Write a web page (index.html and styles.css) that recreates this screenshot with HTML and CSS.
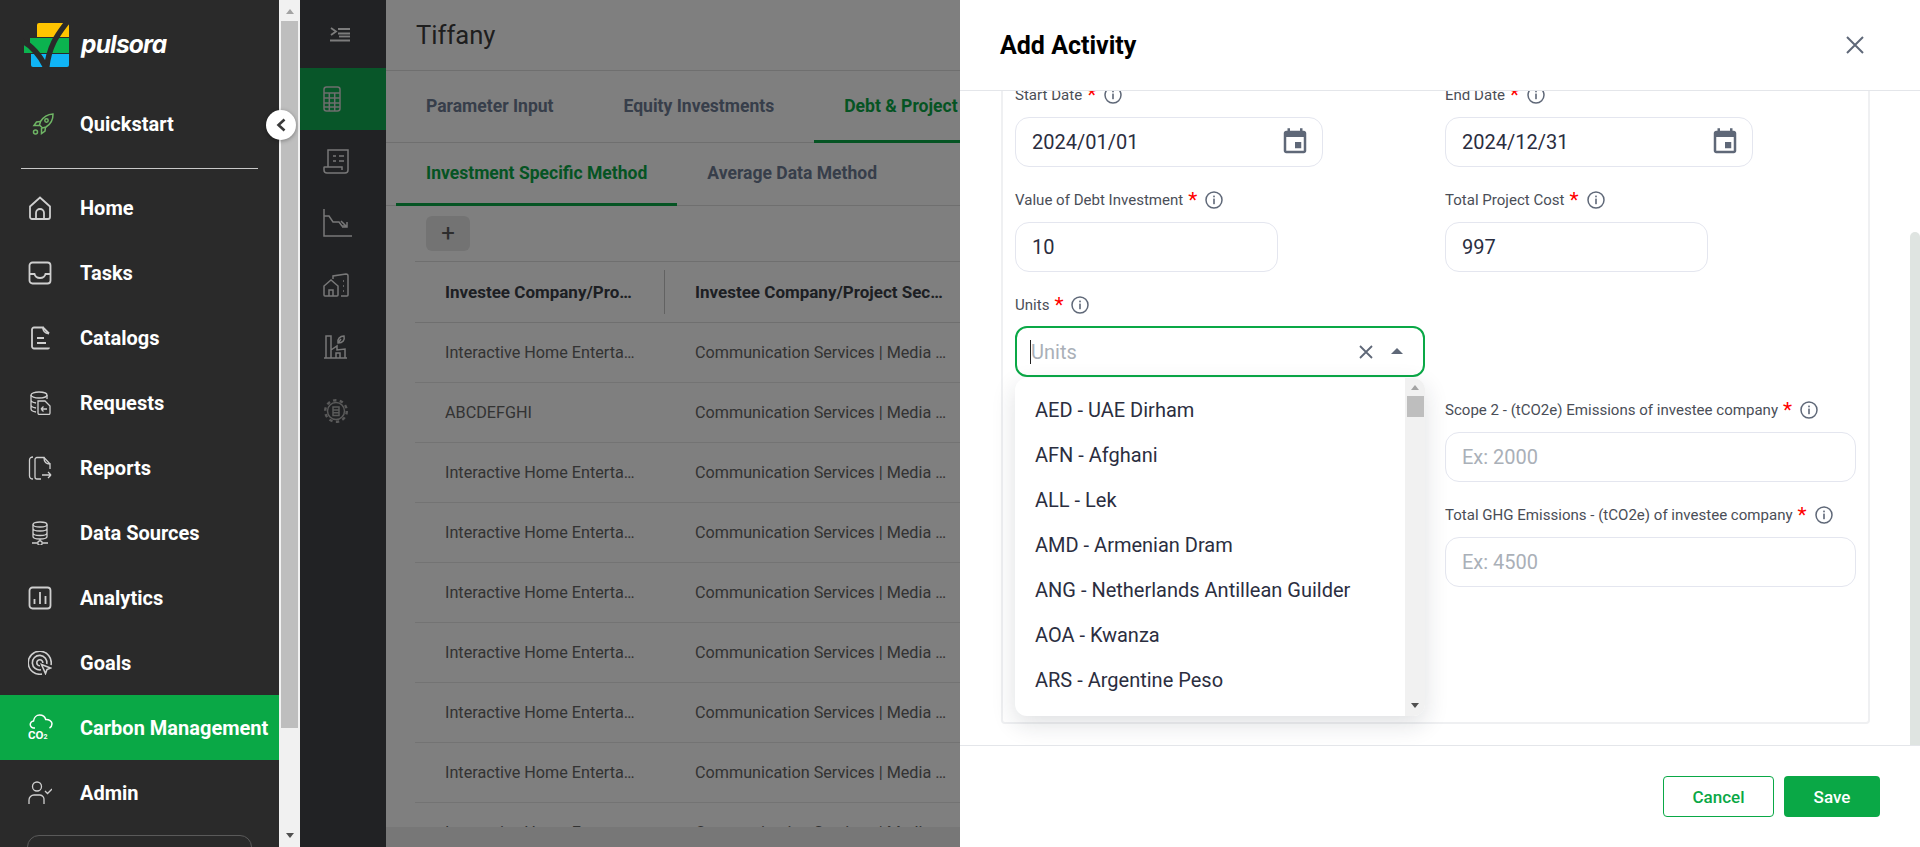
FILE: index.html
```html
<!DOCTYPE html>
<html lang="en">
<head>
<meta charset="utf-8">
<title>Add Activity</title>
<link rel="stylesheet" href="styles.css">
</head>
<body>
<svg class="sprite" aria-hidden="true">
  <symbol id="info" viewBox="0 0 18 18"><circle cx="9" cy="9" r="8" fill="none" stroke="currentColor" stroke-width="1.5"/><rect x="8.2" y="7.6" width="1.6" height="5.6" fill="currentColor"/><rect x="8.2" y="4.6" width="1.6" height="1.7" fill="currentColor"/></symbol>
  <symbol id="cal" viewBox="0 0 24 24"><path fill="currentColor" d="M17 12h-5v5h5v-5zM16 1v2H8V1H6v2H5c-1.11 0-1.99.9-1.99 2L3 19c0 1.1.89 2 2 2h14c1.1 0 2-.9 2-2V5c0-1.1-.9-2-2-2h-1V1h-2zm3 18H5V8h14v11z"/></symbol>
</svg>

<div class="app">
  <aside class="sidebar">
    <div class="brand">
      <svg class="logo" viewBox="0 0 46 46" width="46" height="46">
        <path fill="#ffc400" d="M16 1h28a2 2 0 0 1 2 2v12H14V3a2 2 0 0 1 2-2z"/>
        <path fill="#0bb34f" d="M7 16h39v15H7zM1 22h6v9H1z"/>
        <path fill="#10b4f5" d="M8 32h38v11a2 2 0 0 1-2 2H10a2 2 0 0 1-2-2z"/>
        <path fill="none" stroke="#2a2a2a" stroke-width="5.5" d="M45 -1C36 11 26 22 23.500 47"/>
        <path fill="none" stroke="#2a2a2a" stroke-width="5.5" d="M-1 19C8 23 18 34 23.500 47"/>
      </svg>
      <span class="wordmark">pulsora</span>
    </div>
    <a class="nav-item">
      <svg class="nav-icon rocket" viewBox="0 0 24 24"><path d="M22 2c-5.500 .3-9.500 2.700-12.500 7.500l-1 3.500 3 3 3.500-1c4.800-3 7.200-7 7-13z"/><circle cx="15.500" cy="8.500" r="1.700"/><path d="M9.500 9.500l-4 .5L3 13.500h5.500M14.500 15l-.5 4-3.500 2.500V16"/><circle cx="4.500" cy="20" r="2"/></svg>
      <span>Quickstart</span>
    </a>
    <hr class="divider">
    <a class="nav-item">
      <svg class="nav-icon" viewBox="0 0 24 24"><path d="M2 10.500 12 1.500l10 9V21a2 2 0 0 1-2 2H4a2 2 0 0 1-2-2z"/><path d="M8 23v-6a4 4 0 0 1 8 0v6"/></svg>
      <span>Home</span>
    </a>
    <a class="nav-item">
      <svg class="nav-icon" viewBox="0 0 24 24"><rect x="1.500" y="1.500" width="21" height="21" rx="3"/><path d="M1.500 13h5c.8 3 2.500 4 5.500 4s4.700-1 5.500-4h5"/></svg>
      <span>Tasks</span>
    </a>
    <a class="nav-item">
      <svg class="nav-icon" viewBox="0 0 24 24"><path d="M21 21.500c0 .6-.5 1-1 1H6a2 2 0 0 1-2-2V3.500a2 2 0 0 1 2-2h9c0 4 1.500 5.500 6 6"/><path d="M15 1.500l6 6M9 12h7M9 17h9"/></svg>
      <span>Catalogs</span>
    </a>
    <a class="nav-item">
      <svg class="nav-icon thin" viewBox="0 0 24 24"><ellipse cx="11" cy="4" rx="8" ry="3"/><path d="M3 4v14c0 1.500 2 2.500 5 3M19 4v4M3 9c0 1.500 2 2.500 5 3M3 14c0 1.500 2 2.500 5 3"/><path d="M10 10h7l5 5v7a1.500 1.500 0 0 1-1.500 1.500h-9A1.500 1.500 0 0 1 10 22z"/><path d="M13 18h6M13 18l2.500-2.500M13 18l2.500 2.500"/></svg>
      <span>Requests</span>
    </a>
    <a class="nav-item">
      <svg class="nav-icon thin" viewBox="0 0 24 24"><path d="M5 23c-2 0-3.500-1-3.500-3V4c0-2 1.500-3 3.500-3"/><path d="M22 13V8c-4 0-6-1.500-6-6.500H9a2 2 0 0 0-2 2V21a2 2 0 0 0 2 2h4"/><path d="M16 1.500 22 8M14 19h9M23 19l-3-3M23 19l-3 3"/></svg>
      <span>Reports</span>
    </a>
    <a class="nav-item">
      <svg class="nav-icon thin" viewBox="0 0 24 24"><ellipse cx="12" cy="3.500" rx="7" ry="2.500"/><path d="M5 3.500v12c0 1.400 3 2.500 7 2.500s7-1.100 7-2.500v-12M5 7.500c0 1.400 3 2.500 7 2.500s7-1.100 7-2.500M5 12c0 1.400 3 2.500 7 2.500s7-1.100 7-2.500M12 18v2M4 22h5.500M14.500 22H20"/><circle cx="12" cy="22" r="2.200"/></svg>
      <span>Data Sources</span>
    </a>
    <a class="nav-item">
      <svg class="nav-icon" viewBox="0 0 24 24"><rect x="1.500" y="1.500" width="21" height="21" rx="3"/><path d="M6.500 18v-5M12 18V6M17.500 18V10"/></svg>
      <span>Analytics</span>
    </a>
    <a class="nav-item">
      <svg class="nav-icon thin2" viewBox="0 0 24 24"><path d="M14 23a11.500 11.500 0 1 1 9-9"/><path d="M13 18.800a7.300 7.300 0 1 1 5.800-5.800"/><path d="M12 14.800a3 3 0 1 1 2.800-2.800"/><path d="M13.500 13.500l9 3.500-3.500 1.500-1.500 4z"/></svg>
      <span>Goals</span>
    </a>
    <a class="nav-item active">
      <svg class="nav-icon co2" viewBox="0 0 26 26"><path d="M7 14H6a3.500 3.500 0 0 1-.5-7C6 3.500 8.500 1 11.500 1c3 0 5.500 1.800 6.200 4.500 3.300-.2 6.300 1.700 6.300 4.300 0 1.900-1 3.300-2.500 4.200"/><text x="0" y="25" class="co2-text">CO<tspan class="co2-sub" dy="0">2</tspan></text></svg>
      <span>Carbon Management</span>
    </a>
    <a class="nav-item">
      <svg class="nav-icon thin" viewBox="0 0 24 24"><circle cx="9" cy="5.500" r="4.500"/><path d="M1 23v-4a5 5 0 0 1 5-5h6a4.500 4.500 0 0 1 4 5v4"/><path d="M17 10l2.500 2.500L24 8"/></svg>
      <span>Admin</span>
    </a>
    <div class="side-box"></div>
  </aside>

  <div class="page-scroll">
    <span class="arrow-up"></span>
    <div class="page-thumb"></div>
    <span class="arrow-down"></span>
  </div>

  <nav class="rail">
    <div class="rail-head">
      <svg class="rail-menu" viewBox="0 0 20 15" width="20" height="15"><path d="M1 1l5 3.500L1 8M8 2h12M8 6.500h12M0 13.500h20"/><path d="M9 9.500h11"/></svg>
    </div>
    <div class="rail-item selected">
      <svg viewBox="0 0 18 26" width="18" height="26"><rect x="1" y="1" width="16" height="24" rx="2.500"/><path d="M1 7h16M1 12h16M1 17h16M1 21h16M6.300 7v18M11.700 7v18"/></svg>
    </div>
    <div class="rail-item">
      <svg viewBox="0 0 26 26" width="26" height="26"><path d="M5 19V2h20v20a3 3 0 0 1-3 3H4a3 3 0 0 1-3-3v-2.500c0-.4.300-.5.500-.5H19v3"/><path d="M10 8h3M16 8h5M10 13h3M16 13h5"/></svg>
    </div>
    <div class="rail-item">
      <svg viewBox="0 0 30 28" width="30" height="28"><path d="M1 0v27h28"/><path d="M1 7h5l4 6h6l3 4h4"/><path d="M18 12l6 6M24 13v5h-5"/></svg>
    </div>
    <div class="rail-item">
      <svg viewBox="0 0 26 24" width="26" height="24"><path d="M1 22V13l7-6 7 6v9a1 1 0 0 1-1 1H2a1 1 0 0 1-1-1zM6 23v-6h4v6"/><path d="M10 6V3l13-2a2 2 0 0 1 2 2v19a1 1 0 0 1-1 1h-6M20 8h1M20 13h1M20 18h1"/></svg>
    </div>
    <div class="rail-item">
      <svg viewBox="0 0 24 24" width="24" height="24"><path d="M1 23h23M3 23V1h5v22M8 15l6-4v4l8-1v9M13 23v-5h4v5"/><path d="M15 8c-1-4 2-7 6-7 1 4-1 7-6 7zM15 8l3-4"/></svg>
    </div>
    <div class="rail-item dim">
      <svg viewBox="0 0 26 26" width="26" height="26"><circle cx="13" cy="13" r="8.500"/><circle class="teeth" cx="13" cy="13" r="10.800"/><path d="M10 9h6v8.500h-6zM10 12h6M10 14.800h6"/></svg>
    </div>
  </nav>

  <main class="main">
    <header class="main-head"><h1 class="main-title">Tiffany</h1></header>
    <div class="tabs">
      <a class="tab">Parameter Input</a>
      <a class="tab">Equity Investments</a>
      <a class="tab on">Debt &amp; Project Financing</a>
    </div>
    <div class="subtabs">
      <a class="subtab on">Investment Specific Method</a>
      <a class="subtab">Average Data Method</a>
    </div>
    <div class="toolbar"><button class="add-btn">+</button></div>
    <div class="table">
      <div class="t-row t-head"><div class="c1 sep"><span class="cell">Investee Company/Project Name</span></div><div class="c2"><span class="cell">Investee Company/Project Sector</span></div></div>
      <div class="t-row"><div class="c1"><span class="cell">Interactive Home Entertainment</span></div><div class="c2"><span class="cell">Communication Services | Media &amp; Entertainment</span></div></div>
      <div class="t-row"><div class="c1"><span class="cell">ABCDEFGHI</span></div><div class="c2"><span class="cell">Communication Services | Media &amp; Entertainment</span></div></div>
      <div class="t-row"><div class="c1"><span class="cell">Interactive Home Entertainment</span></div><div class="c2"><span class="cell">Communication Services | Media &amp; Entertainment</span></div></div>
      <div class="t-row"><div class="c1"><span class="cell">Interactive Home Entertainment</span></div><div class="c2"><span class="cell">Communication Services | Media &amp; Entertainment</span></div></div>
      <div class="t-row"><div class="c1"><span class="cell">Interactive Home Entertainment</span></div><div class="c2"><span class="cell">Communication Services | Media &amp; Entertainment</span></div></div>
      <div class="t-row"><div class="c1"><span class="cell">Interactive Home Entertainment</span></div><div class="c2"><span class="cell">Communication Services | Media &amp; Entertainment</span></div></div>
      <div class="t-row"><div class="c1"><span class="cell">Interactive Home Entertainment</span></div><div class="c2"><span class="cell">Communication Services | Media &amp; Entertainment</span></div></div>
      <div class="t-row"><div class="c1"><span class="cell">Interactive Home Entertainment</span></div><div class="c2"><span class="cell">Communication Services | Media &amp; Entertainment</span></div></div>
      <div class="t-row"><div class="c1"><span class="cell">Interactive Home Entertainment</span></div><div class="c2"><span class="cell">Communication Services | Media &amp; Entertainment</span></div></div>
    </div>
    <div class="main-foot"></div>
  </main>
</div>

<button class="collapse" aria-label="Collapse">
  <svg viewBox="0 0 12 14" width="12" height="14"><path d="M9.500 1.500 3.500 7l6 5.500"/></svg>
</button>
<div class="backdrop"></div>

<section class="drawer">
  <header class="drawer-head">
    <h2 class="drawer-title">Add Activity</h2>
    <svg class="x-icon" viewBox="0 0 18 18" width="18" height="18"><path d="M1 1l16 16M17 1 1 17"/></svg>
  </header>
  <div class="drawer-body">
    <div class="form-scroll">
      <div class="card">
        <div class="grid">
          <div class="field">
            <div class="lbl">Start Date<span class="star">*</span><svg class="info"><use href="#info"/></svg></div>
            <div class="box w-date"><span class="val">2024/01/01</span><svg class="cal"><use href="#cal"/></svg></div>
          </div>
          <div class="field">
            <div class="lbl">End Date<span class="star">*</span><svg class="info"><use href="#info"/></svg></div>
            <div class="box w-date"><span class="val">2024/12/31</span><svg class="cal"><use href="#cal"/></svg></div>
          </div>
          <div class="field">
            <div class="lbl">Value of Debt Investment<span class="star">*</span><svg class="info"><use href="#info"/></svg></div>
            <div class="box w-num"><span class="val">10</span></div>
          </div>
          <div class="field">
            <div class="lbl">Total Project Cost<span class="star">*</span><svg class="info"><use href="#info"/></svg></div>
            <div class="box w-num"><span class="val">997</span></div>
          </div>
          <div class="field">
            <div class="lbl">Units<span class="star">*</span><svg class="info"><use href="#info"/></svg></div>
            <div class="select">
              <i class="caret"></i><span class="val ph">Units</span>
              <svg class="sel-x" viewBox="0 0 14 14" width="14" height="14"><path d="M1 1l12 12M13 1 1 13"/></svg>
              <span class="sel-up"></span>
              <div class="menu">
                <ul class="menu-list">
                  <li>AED - UAE Dirham</li>
                  <li>AFN - Afghani</li>
                  <li>ALL - Lek</li>
                  <li>AMD - Armenian Dram</li>
                  <li>ANG - Netherlands Antillean Guilder</li>
                  <li>AOA - Kwanza</li>
                  <li>ARS - Argentine Peso</li>
                </ul>
                <div class="menu-scroll">
                  <span class="arrow-up"></span>
                  <div class="menu-thumb"></div>
                  <span class="arrow-down"></span>
                </div>
              </div>
            </div>
          </div>
          <div class="spacer"></div>
          <div class="field col-2">
            <div class="lbl">Scope 2 - (tCO2e) Emissions of investee company<span class="star">*</span><svg class="info"><use href="#info"/></svg></div>
            <div class="box"><span class="val ph">Ex: 2000</span></div>
          </div>
          <div class="field col-2">
            <div class="lbl">Total GHG Emissions - (tCO2e) of investee company<span class="star">*</span><svg class="info"><use href="#info"/></svg></div>
            <div class="box"><span class="val ph">Ex: 4500</span></div>
          </div>
        </div>
      </div>
    </div>
    <div class="drawer-scroll"><div class="drawer-thumb"></div></div>
  </div>
  <footer class="drawer-foot">
    <button class="btn ghost">Cancel</button>
    <button class="btn solid">Save</button>
  </footer>
</section>
</body>
</html>
```
FILE: styles.css
```css
* { box-sizing: border-box; }
html, body { margin: 0; height: 100%; overflow: hidden; }
body { font-family: Roboto, "Liberation Sans", sans-serif; background: #fff; }
.sprite { width: 0; height: 0; position: absolute; }
.app { display: flex; height: 847px; overflow: hidden; }

/* sidebar */
.sidebar { width: 279px; flex: none; background: #2a2a2a; overflow: hidden; }
.brand { height: 91px; display: flex; align-items: flex-start; padding: 22px 0 0 23px; }
.logo { flex: none; }
.wordmark { margin: 5px 0 0 12px; font: italic 700 24.500px/34px Inter, sans-serif; color: #fff; letter-spacing: -.8px; }
.nav-item { height: 65px; display: flex; align-items: center; padding-left: 28px; color: #fff; font-size: 20px; font-weight: 700; }
.nav-item span { margin-left: 28px; }
.nav-icon { width: 24px; height: 24px; flex: none; fill: none; stroke: #cfcfcf; stroke-width: 1.800; }
.nav-icon.thin { stroke-width: 1.300; }
.nav-icon.thin2 { stroke-width: 1.600; }
.rocket { stroke: #6fb565; stroke-width: 1.500; margin-left: 3px; margin-right: -3px; }
.nav-item.active { background: #0aa846; }
.co2 { stroke: #fff; stroke-width: 1.500; width: 26px; height: 26px; margin-right: -2px; margin-top: -2px; }
.co2-text { font: 700 11.500px Roboto, sans-serif; fill: #fff; stroke: none; }
.co2-sub { font-size: 7px; }
.divider { height: 1px; margin: 12px 21px 6px; border: 0; background: #c8c8c8; }
.side-box { margin: 10px 27px 0; height: 60px; border: 1px solid #5a5a5a; border-radius: 12px; }

/* page scrollbar */
.page-scroll { width: 21px; flex: none; background: #f1f1f1; display: flex; flex-direction: column; align-items: center; padding: 9px 0; }
.page-thumb { width: 17px; height: 707px; margin-top: 7px; background: #bebebe; }
.arrow-up { width: 0; height: 0; border: 4.500px solid transparent; border-top: 0; border-bottom: 5px solid #a3a3a3; flex: none; }
.arrow-down { width: 0; height: 0; border: 4.500px solid transparent; border-bottom: 0; border-top: 5px solid #505050; flex: none; margin-top: auto; }

/* rail */
.rail { width: 86px; flex: none; background: #424448; }
.rail-head { height: 68px; padding: 27px 0 0 30px; }
.rail-menu { fill: none; stroke: #f8f8f8; stroke-width: 1.800; display: block; }
.rail-item { height: 62px; display: flex; align-items: center; padding-left: 23px; }
.rail-item svg { fill: none; stroke: #f0f0f0; stroke-width: 1.500; }
.rail-item.selected { background: #10ac52; }
.rail-item.selected svg { stroke: #dcdcdc; }
.rail-item.dim { padding-top: 4px; }
.rail-item.dim svg { stroke: #b4b4b4; }
.rail-item .teeth { stroke-width: 2.400; stroke-dasharray: 3.400 3.400; }

/* main */
.main { flex: 1; min-width: 0; background: #fff; display: flex; flex-direction: column; overflow: hidden; }
.main-head { height: 71px; flex: none; border-bottom: 1px solid #dedede; padding: 19px 0 0 30px; }
.main-title { margin: 0; font-size: 25.600px; line-height: 32px; font-weight: 400; color: #3c3c3c; }
.tabs { height: 72px; flex: none; display: flex; gap: 10px; padding-left: 10px; border-bottom: 1px solid #dedede; }
.tab { padding: 0 30px; display: flex; align-items: center; white-space: nowrap; font-size: 17.550px; font-weight: 700; color: #6f7d95; height: 72px; border-bottom: 3px solid transparent; }
.tab.on { color: #0aa846; border-bottom-color: #0aa846; }
.subtabs { height: 63px; flex: none; display: flex; padding-left: 10px; border-bottom: 1px solid #dedede; }
.subtab { padding: 0 30px; display: flex; align-items: center; white-space: nowrap; font-size: 17.550px; font-weight: 700; color: #6f7d95; height: 63px; border-bottom: 3px solid transparent; }
.subtab.on { color: #0aa846; border-bottom-color: #0aa846; }
.toolbar { height: 55px; flex: none; padding: 10px 0 0 40px; }
.add-btn { width: 44px; height: 35px; border: 0; border-radius: 6px; background: #e6e6e6; color: #5a5a5a; font: 400 24px/35px Roboto, sans-serif; padding: 0; }
.table { flex: 1; min-height: 0; overflow: hidden; margin-left: 29px; border-top: 1px solid #dedede; }
.t-row { height: 60px; display: flex; align-items: center; border-bottom: 1px solid #e6e6e6; font-size: 16.200px; color: #666; }
.t-head { height: 61px; font-weight: 700; color: #3a3f47; font-size: 17px; border-bottom-color: #dedede; }
.c1 { width: 250px; flex: none; padding-left: 30px; height: 44px; display: flex; align-items: center; }
.c2 { flex: none; width: 300px; padding-left: 30px; display: flex; align-items: center; }
.c1 .cell { width: 191px; }
.c2 .cell { width: 252px; }
.sep { border-right: 1px solid #c4c4c4; }
.cell { display: block; white-space: nowrap; overflow: hidden; text-overflow: ellipsis; }
.main-foot { height: 20px; flex: none; background: #eeeeee; }

/* overlays */
.collapse { position: fixed; left: 266px; top: 110px; width: 30px; height: 30px; border: 0; border-radius: 50%; background: #fff; box-shadow: 0 1px 4px rgba(0,0,0,.35); display: flex; align-items: center; justify-content: center; padding: 0; z-index: 3; }
.collapse svg { fill: none; stroke: #3a3a3a; stroke-width: 2.600; }
.backdrop { position: fixed; left: 300px; top: 0; width: 660px; height: 847px; background: rgba(0,0,0,.5); z-index: 2; }

/* drawer */
.drawer { position: fixed; left: 960px; top: 0; width: 960px; height: 847px; background: #fff; display: flex; flex-direction: column; z-index: 4; }
.drawer-head { height: 91px; flex: none; display: flex; align-items: center; justify-content: space-between; padding: 0 56px 0 40px; border-bottom: 1px solid #e4e6ea; }
.drawer-title { margin: 0; font-size: 25px; font-weight: 700; color: #000; }
.x-icon { fill: none; stroke: #5f6878; stroke-width: 2; }
.drawer-body { flex: 1; min-height: 0; display: flex; overflow: hidden; }
.form-scroll { flex: 1; min-width: 0; overflow: hidden; padding-left: 41px; }
.card { width: 869px; height: 659px; margin-top: -26px; border: 2px solid #eff0f2; border-radius: 4px; padding: 18px 12px 0; }
.grid { display: grid; grid-template-columns: 410px 411px; column-gap: 20px; row-gap: 23px; }
.spacer { grid-column: 2; }
.col-2 { grid-column: 2; }
.lbl { height: 20px; margin-bottom: 12px; display: flex; align-items: center; font-size: 15.050px; line-height: 20px; color: #4a4e57; white-space: nowrap; }
.star { color: #f00; font-size: 21px; line-height: 20px; margin-left: 5px; position: relative; top: 0; }
.info { width: 18px; height: 18px; margin-left: 8px; color: #5f6878; flex: none; }
.box { height: 50px; border: 1px solid #e4e6ef; border-radius: 14px; display: flex; align-items: center; justify-content: space-between; padding: 0 12px 0 16px; }
.w-date { width: 308px; }
.w-num { width: 263px; }
.val { font-size: 20px; color: #2b2e3f; }
.ph { color: #aab0b8; }
.cal { width: 30px; height: 30px; color: #5f6878; flex: none; }
.select { position: relative; height: 51px; margin-top: -1px; border: 2px solid #0aa846; border-radius: 12px; display: flex; align-items: center; padding: 1px 0 0 13px; }
.caret { width: 1px; height: 24px; background: #222; flex: none; }
.sel-x { margin-left: auto; fill: none; stroke: #5f6878; stroke-width: 1.800; flex: none; }
.sel-up { width: 0; height: 0; border: 6.500px solid transparent; border-top: 0; border-bottom: 6px solid #5f6878; margin: 0 20px 2px 18px; flex: none; }
.menu { position: absolute; left: -2px; right: -2px; top: 50px; height: 338px; background: #fff; border-radius: 12px; box-shadow: 0 8px 24px rgba(30,35,50,.14); display: flex; overflow: hidden; z-index: 5; }
.menu-list { flex: 1; list-style: none; margin: 0; padding: 9px 0 0 20px; }
.menu-list li { height: 45px; display: flex; align-items: center; font-size: 20px; color: #2b2e3f; white-space: nowrap; }
.menu-scroll { width: 20px; flex: none; background: #f1f1f1; display: flex; flex-direction: column; align-items: center; padding: 7px 0 8px; }
.menu-thumb { width: 17px; height: 21px; margin-top: 6px; background: #bebebe; }
.drawer-scroll { width: 10px; padding-top: 141px; flex: none; display: flex; }
.drawer-thumb { flex: 1; background: #dfe4e1; border-radius: 5px 5px 0 0; }
.drawer-foot { height: 102px; flex: none; border-top: 1px solid #e4e6ea; display: flex; justify-content: flex-end; gap: 10px; padding: 30px 40px 0 0; }
.btn { height: 41px; border-radius: 4px; font: 500 17px Roboto, sans-serif; padding: 0; }
.ghost { width: 111px; background: #fff; border: 1px solid #0aa846; color: #0aa846; }
.solid { width: 96px; background: #0aa846; border: 0; color: #fff; }
```
